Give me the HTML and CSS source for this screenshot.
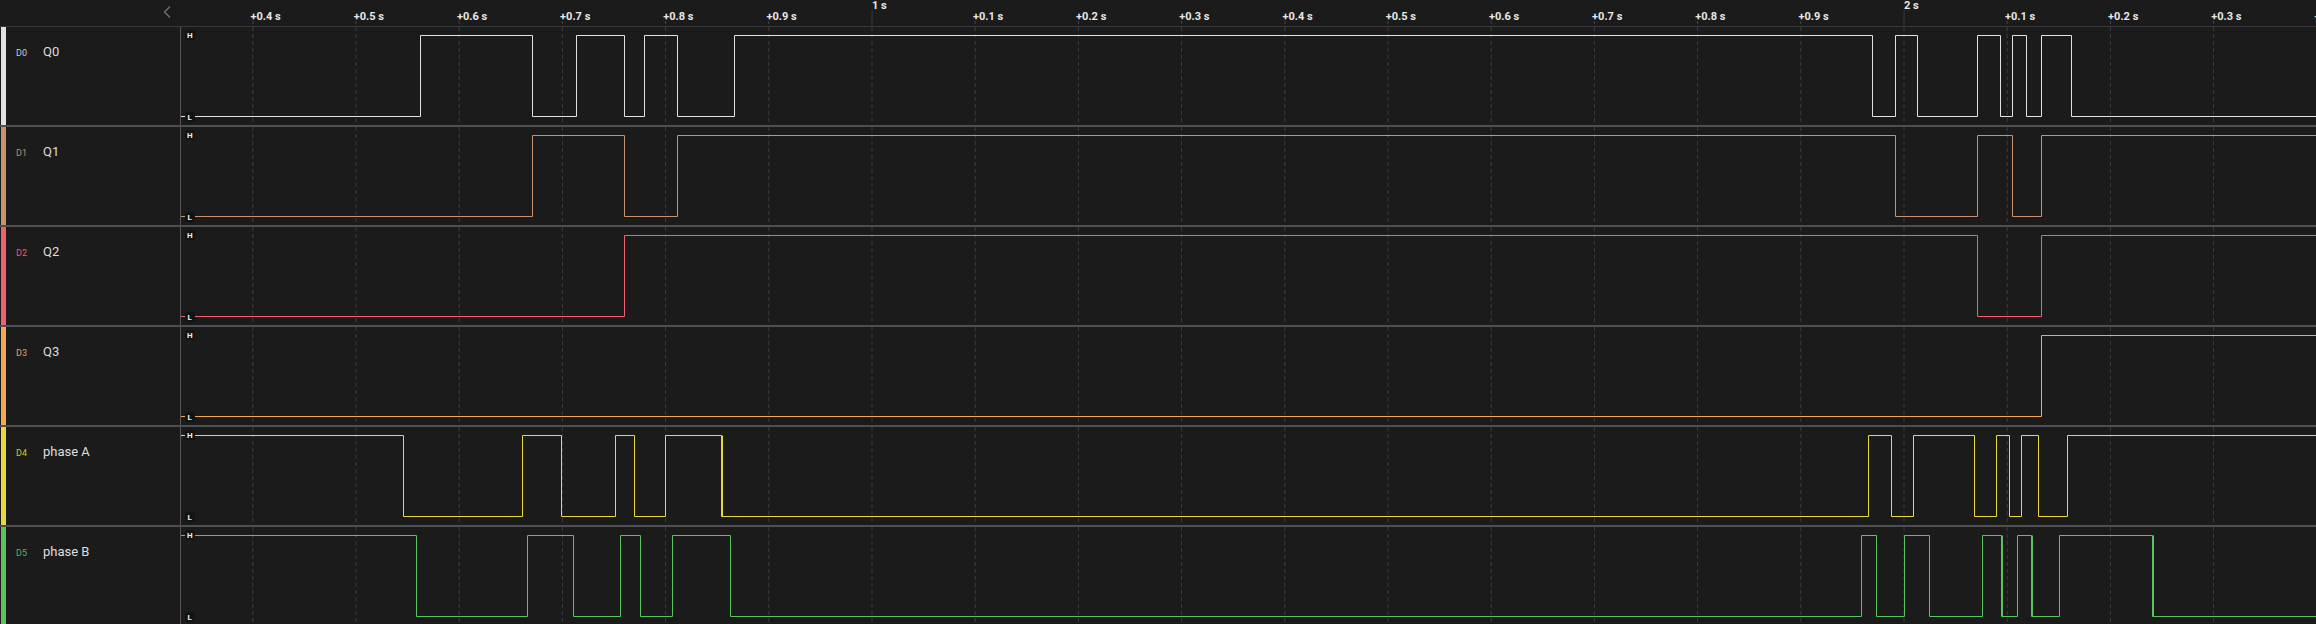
FILE: index.html
```html
<!DOCTYPE html>
<html lang="en">
    <head>
        <meta charset="utf-8">
        <title>Logic capture</title>
        <link rel="stylesheet" href="styles.css">
    </head>
    <body>
      <div class="top">
        <div class="top-left">
          <svg class="back" width="8" height="12" viewBox="0 0 8 12"><polyline points="6.5,1 1.5,6 6.5,11"></polyline></svg>
        </div>
        <svg id="ruler" class="ruler" width="2135" height="26"></svg>
      </div>

      <div class="row c0">
        <div class="bar"></div>
        <div class="label"><span class="ch">D0</span><span class="name">Q0</span></div>
        <svg class="wave" width="2135" height="98"></svg>
      </div>
      <div class="row c1">
        <div class="bar"></div>
        <div class="label"><span class="ch">D1</span><span class="name">Q1</span></div>
        <svg class="wave" width="2135" height="98"></svg>
      </div>
      <div class="row c2">
        <div class="bar"></div>
        <div class="label"><span class="ch">D2</span><span class="name">Q2</span></div>
        <svg class="wave" width="2135" height="98"></svg>
      </div>
      <div class="row c3">
        <div class="bar"></div>
        <div class="label"><span class="ch">D3</span><span class="name">Q3</span></div>
        <svg class="wave" width="2135" height="98"></svg>
      </div>
      <div class="row c4">
        <div class="bar"></div>
        <div class="label"><span class="ch">D4</span><span class="name">phase A</span></div>
        <svg class="wave" width="2135" height="98"></svg>
      </div>
      <div class="row c5">
        <div class="bar"></div>
        <div class="label"><span class="ch">D5</span><span class="name">phase B</span></div>
        <svg class="wave" width="2135" height="98"></svg>
      </div>

      <script>
      var NS = 'http://www.w3.org/2000/svg';
      var left = 181;          // page x where the waveform area starts
      var tick0 = 252.8;       // +0.4 s
      var step = 103.2;        // 0.1 s
      var W = 2135;
      var HI = 8.5, LO = 89.5;

      function el(tag, attrs, parent) {
        var e = document.createElementNS(NS, tag);
        for (var k in attrs) e.setAttribute(k, attrs[k]);
        parent.appendChild(e);
        return e;
      }

      // time ruler
      var ruler = document.getElementById('ruler');
      for (var k = 0; k <= 20; k++) {
        var x = tick0 + k * step - left;
        var n = (k + 4) % 10;
        var t;
        if (n === 0) {
          el('line', {x1: x, x2: x, y1: 10, y2: 26, 'class': 'major'}, ruler);
          t = el('text', {x: x, y: 9}, ruler);
          t.textContent = (k === 6 ? '1' : '2') + ' s';
        } else {
          el('line', {x1: x, x2: x, y1: 21, y2: 26, 'class': 'minor'}, ruler);
          t = el('text', {x: x - 2.3, y: 20}, ruler);
          t.textContent = '+0.' + n + ' s';
        }
      }

      // edges in page x, level toggles at each one
      var signals = [
        {hi: false, edges: [420, 532, 576, 624, 644, 677, 734, 1872, 1895, 1917, 1977, 2000, 2012, 2026, 2041, 2071]},
        {hi: false, edges: [532, 624, 677, 1895, 1977, 2012, 2041]},
        {hi: false, edges: [624, 1977, 2041]},
        {hi: false, edges: [2041]},
        {hi: true, edges: [403, 522, 561, 615, 634, 665, 721, 1868, 1891, 1913, 1974, 1996, 2009, 2021, 2038, 2067], glitch: [721]},
        {hi: true, edges: [416, 527, 573, 620, 640, 672, 730, 1861, 1876, 1904, 1929, 1982, 2001, 2017, 2031, 2059, 2152], glitch: [2001, 2031, 2152]}
      ];

      var waves = document.querySelectorAll('.wave');
      for (var i = 0; i < waves.length; i++) {
        var svg = waves[i];
        var s = signals[i];

        for (var k = 0; k <= 20; k++) {
          var gx = tick0 + k * step - left;
          el('line', {x1: gx, x2: gx, y1: 0, y2: 98, 'class': 'grid'}, svg);
        }

        var lvl = s.hi;
        var d = 'M0 ' + (lvl ? HI : LO);
        for (var j = 0; j < s.edges.length; j++) {
          var ex = s.edges[j] - left + 0.5;
          lvl = !lvl;
          d += ' H' + ex + ' V' + (lvl ? HI : LO);
        }
        d += ' H' + W;
        el('path', {d: d, 'class': 'sig'}, svg);

        (s.glitch || []).forEach(function(g) {
          var gx2 = g - left + 1.5;
          el('line', {x1: gx2, x2: gx2, y1: HI, y2: LO, 'class': 'sig'}, svg);
        });

        el('rect', {x: 4, y: 3, width: 10, height: 10, rx: 2, 'class': 'tag'}, svg);
        var h = el('text', {x: 6, y: 11, 'class': 'lvl'}, svg);
        h.textContent = 'H';
        el('rect', {x: 4, y: 85, width: 10, height: 10, rx: 2, 'class': 'tag'}, svg);
        var l = el('text', {x: 6.5, y: 93, 'class': 'lvl'}, svg);
        l.textContent = 'L';
      }
      </script>
    </body>
</html>
```

FILE: styles.css
```css
body { margin: 0; background: #1b1b1c; font-family: Roboto, "Noto Sans", sans-serif; overflow: hidden; width: 2316px; height: 624px; }

.top { display: flex; height: 26px; border-bottom: 1px solid #38383b; }
.top-left { width: 181px; flex: none; display: flex; justify-content: flex-end; align-items: center; padding-right: 10px; box-sizing: border-box; }
.back { display: block; margin-top: -2px; }
.back polyline { fill: none; stroke: #6c6c70; stroke-width: 1.6; stroke-linecap: round; stroke-linejoin: round; }
.ruler { display: block; flex: none; }
.ruler text { fill: #e8e8e8; font-size: 11px; font-weight: 700; }
.ruler .minor { stroke: #45454a; stroke-width: 1; stroke-dasharray: 3 2; }
.ruler .major { stroke: #3a3a3e; stroke-width: 1; }

.row { display: flex; height: 98px; border-bottom: 2px solid #4f4f53; }
.bar { width: 5px; margin-left: 1px; flex: none; background: var(--c); }
.label { width: 175px; flex: none; box-sizing: border-box; border-right: 1px solid #56565a; display: flex; align-items: baseline; padding: 17px 0 0 10px; }
.ch { width: 27px; font-size: 9px; color: var(--t); }
.name { font-size: 13px; line-height: 16px; color: #dedede; }

.wave { display: block; flex: none; }
.wave .grid { stroke: #3d3d42; stroke-width: 1; stroke-dasharray: 4 3; }
.wave .sig { fill: none; stroke: var(--c); stroke-width: 1; }
.wave .tag { fill: #131314; }
.wave .lvl { fill: #f0f0f0; font-size: 8px; font-weight: 700; }

.c0 { --c: #e2e2e2; --t: #c9cdd6; }
.c1 { --c: #c9926f; --t: #c58a66; }
.c2 { --c: #f2606c; --t: #f05a68; }
.c3 { --c: #f5a851; --t: #f0a04e; }
.c4 { --c: #e9d83c; --t: #d6c632; }
.c5 { --c: #58c45e; --t: #4cb858; }
```
